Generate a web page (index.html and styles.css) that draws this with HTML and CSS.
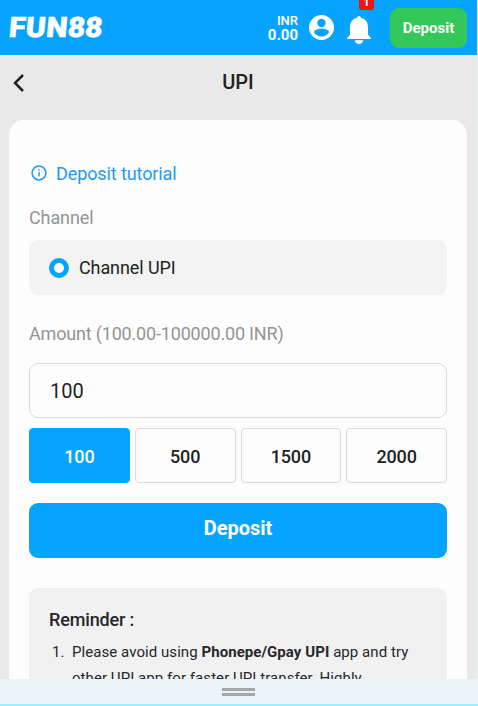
FILE: index.html
```html
<!DOCTYPE html>
<html lang="en">
<head>
    <meta charset="UTF-8">
    <meta name="viewport" content="width=device-width, initial-scale=1.0">
    <title>UPI</title>
    <link rel="stylesheet" href="styles.css">
</head>
<body>
    <div class="screen">
        <header class="top-bar">
            <div class="logo">FUN<span class="logo-num">88</span></div>
            <div class="balance">
                <span class="currency">INR</span>
                <span class="amount">0.00</span>
            </div>
            <svg class="user-icon" viewBox="0 0 24 24">
                <circle cx="12" cy="12" r="12" fill="#fff"/>
                <circle cx="12" cy="7.7" r="4" fill="#07a4ff"/>
                <path d="M4.6 16.3c1.6-2.4 5-3.3 7.4-3.3s5.8.9 7.4 3.3C18 19 15.2 20.6 12 20.6S6 19 4.6 16.3z" fill="#07a4ff"/>
            </svg>
            <div class="bell">
                <svg class="bell-icon" viewBox="0 0 24 28">
                    <path d="M12 0c1.1 0 1.8.8 1.9 1.8C18 2.7 21 6 21 11v7.500l2.700 3.400c.4.600.2 1.100-.5 1.100H.8c-.7 0-.9-.5-.5-1.100L3 18.500V11c0-5 3-8.300 7.100-9.200C10.200.8 10.900 0 12 0zM7.700 24.200h8.600c-.4 2.200-2 3.800-4.300 3.800s-3.900-1.600-4.300-3.800z" fill="#fff"/>
                </svg>
                <span class="badge">1</span>
            </div>
            <button class="top-deposit">Deposit</button>
        </header>

        <nav class="title-bar">
            <svg class="back-icon" viewBox="0 0 12 20">
                <path d="M10 2L2 10l8 8" fill="none" stroke="#222" stroke-width="2.500"/>
            </svg>
            <h1 class="title">UPI</h1>
        </nav>

        <main class="card">
            <a class="tutorial">
                <svg class="info-icon" viewBox="0 0 16 16">
                    <circle cx="8" cy="8" r="6.900" fill="none" stroke="#1c9bfa" stroke-width="1.500"/>
                    <path d="M8 7v4.500M8 4.300v1.500" stroke="#1c9bfa" stroke-width="1.500"/>
                </svg>
                Deposit tutorial
            </a>

            <div class="label">Channel</div>
            <div class="channel">
                <span class="radio"></span>
                Channel UPI
            </div>

            <div class="label label-amount">Amount (100.00-100000.00 INR)</div>
            <input class="amount-input" type="text" value="100">
            <div class="presets">
                <button class="preset active">100</button>
                <button class="preset">500</button>
                <button class="preset">1500</button>
                <button class="preset">2000</button>
            </div>
            <button class="submit">Deposit</button>

            <div class="reminder">
                <h2 class="reminder-title">Reminder :</h2>
                <div class="reminder-item">
                    <span class="number">1.</span>
                    <p>Please avoid using <b>Phonepe/Gpay UPI</b> app and try<br>other UPI app for faster UPI transfer. Highly</p>
                </div>
            </div>
        </main>

        <footer class="drawer">
            <span class="handle"></span>
        </footer>
    </div>
</body>
</html>
```
FILE: styles.css
```css
* {
    margin: 0;
    padding: 0;
    box-sizing: border-box;
    font-family: Roboto, "Liberation Sans", sans-serif;
}

body {
    background: #e9f3f5;
    height: 706px;
    overflow: hidden;
    color: #222;
}

.screen {
    width: 477px;
    height: 706px;
    background: #e9e9e9;
    display: flex;
    flex-direction: column;
}

.top-bar {
    height: 55px;
    flex-shrink: 0;
    background: #07a4ff;
    color: #fff;
    display: flex;
    align-items: center;
    padding: 0 10px 0 9px;
}

.logo {
    font-size: 28px;
    line-height: 58px;
    font-weight: 900;
    letter-spacing: 0.3px;
    width: 93px;
    transform: skewX(-5deg) scaleX(1.08);
    transform-origin: 0 50%;
    -webkit-text-stroke: 0.5px #fff;
    white-space: nowrap;
}

.logo-num {
    letter-spacing: -0.2px;
}

.balance {
    margin-left: auto;
    display: flex;
    flex-direction: column;
    align-items: flex-end;
    line-height: 14px;
}

.currency {
    font-size: 13px;
    font-weight: 500;
}

.amount {
    font-size: 15px;
    font-weight: 700;
}

.user-icon {
    width: 25px;
    height: 25px;
    margin: 0 0 1px 11px;
}

.bell {
    position: relative;
    width: 24px;
    height: 28px;
    margin: 4px 19px 0 13px;
}

.bell-icon {
    width: 24px;
    height: 28px;
    display: block;
}

.badge {
    position: absolute;
    top: -21px;
    left: 12px;
    width: 15px;
    height: 15px;
    border-radius: 3px;
    background: #f51212;
    font-size: 11px;
    font-weight: 700;
    line-height: 16px;
    text-align: center;
}

.top-deposit {
    width: 77px;
    height: 40px;
    border: none;
    border-radius: 9px;
    background: #34c759;
    color: #fff;
    font-size: 15px;
    font-weight: 700;
}

.title-bar {
    height: 65px;
    flex-shrink: 0;
    display: flex;
    align-items: center;
    padding: 0 13px 10px;
}

.back-icon {
    width: 12px;
    height: 20px;
}

.title {
    flex: 1;
    padding: 0 13px 1px 0;
    text-align: center;
    font-size: 20px;
    font-weight: 500;
}

.card {
    flex: 1;
    min-height: 0;
    margin: 0 10px 0 9px;
    padding: 41px 20px 0;
    border-radius: 15px 15px 0 0;
    background: #fdfdfd;
    overflow: hidden;
}

.tutorial {
    display: flex;
    align-items: center;
    gap: 9px;
    height: 24px;
    margin-bottom: 21px;
    padding-left: 2px;
    color: #1c9bfa;
    font-size: 18px;
    letter-spacing: -0.1px;
}

.info-icon {
    width: 16px;
    height: 16px;
}

.label {
    height: 24px;
    line-height: 24px;
    margin-bottom: 10px;
    color: #949494;
    font-size: 18px;
    letter-spacing: -0.1px;
}

.channel {
    display: flex;
    align-items: center;
    gap: 10px;
    height: 55px;
    padding-left: 20px;
    border-radius: 9px;
    background: #f3f3f3;
    font-size: 18px;
    letter-spacing: -0.1px;
}

.radio {
    width: 20px;
    height: 20px;
    border: 5px solid #07a4ff;
    border-radius: 50%;
    background: #fff;
}

.label-amount {
    margin: 27px 0 17px;
    letter-spacing: -0.18px;
}

.amount-input {
    display: block;
    width: 100%;
    height: 55px;
    padding: 0 20px;
    border: 1px solid #dadada;
    border-radius: 9px;
    background: #fdfdfd;
    color: #222;
    font-size: 20px;
}

.presets {
    display: grid;
    grid-template-columns: repeat(4, 1fr);
    gap: 5px;
    margin: 10px 0 20px;
}

.preset {
    height: 55px;
    padding-top: 2px;
    border: 1px solid #dadada;
    border-radius: 4px;
    background: #fdfdfd;
    color: #222;
    font-size: 18px;
    font-weight: 500;
    letter-spacing: -0.2px;
}

.preset.active {
    border-color: #07a4ff;
    background: #07a4ff;
    color: #fff;
}

.submit {
    display: block;
    width: 100%;
    height: 55px;
    padding-bottom: 6px;
    border: none;
    border-radius: 9px;
    background: #07a4ff;
    color: #fff;
    font-size: 20px;
    font-weight: 700;
}

.reminder {
    margin-top: 30px;
    padding: 20px 20px 0;
    height: 150px;
    border-radius: 9px;
    background: #f1f1f1;
    color: #26272b;
}

.reminder-title {
    font-size: 18px;
    line-height: 24px;
    font-weight: 500;
    letter-spacing: -0.15px;
}

.reminder-item {
    display: flex;
    margin-top: 7px;
    font-size: 15px;
    line-height: 26px;
    letter-spacing: 0.06px;
    white-space: nowrap;
}

.number {
    width: 23px;
    padding-left: 3px;
    flex-shrink: 0;
}

.drawer {
    width: 478px;
    height: 27px;
    flex-shrink: 0;
    display: flex;
    justify-content: center;
    padding: 9px 2px 0 0;
    background: #eaf3f6;
    border-bottom: 2px solid #9eedfd;
}

.handle {
    width: 33px;
    height: 8px;
    border-top: 3px solid #a6a6aa;
    border-bottom: 3px solid #a6a6aa;
}
```
